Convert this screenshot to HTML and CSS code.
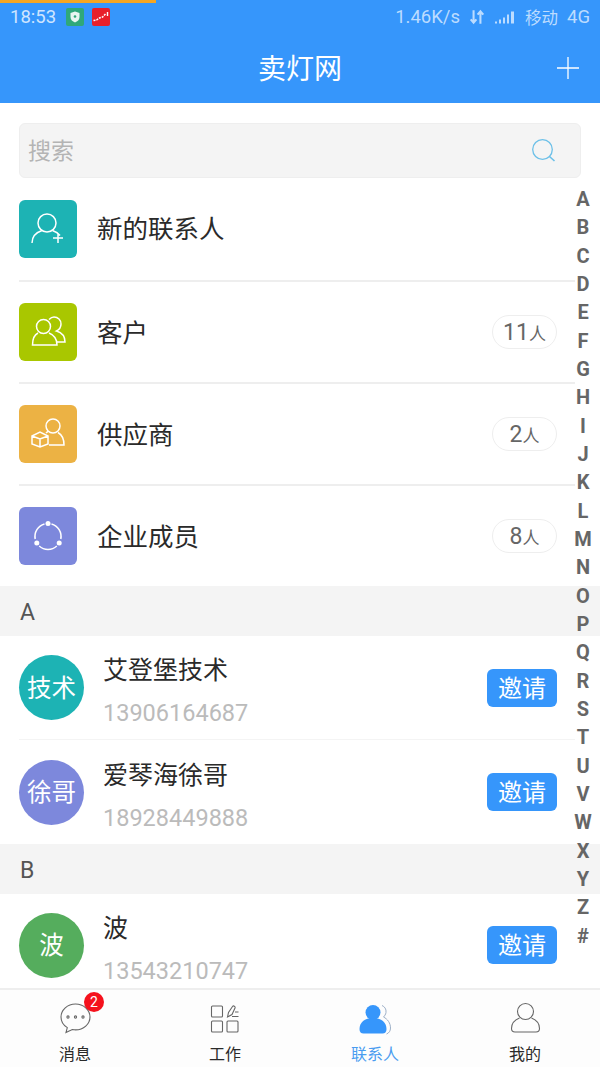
FILE: index.html
```html
<!DOCTYPE html>
<html lang="zh-CN">

<head>
    <meta charset="UTF-8">
    <meta name="viewport" content="width=device-width, initial-scale=1.0">
    <title>卖灯网</title>
    <link rel="stylesheet" href="styles.css">
</head>

<body>
    <div class="app">
        <div class="top">
            <div class="progress"></div>
            <div class="status">
                <span class="time">18:53</span>
                <svg class="app-icon" viewBox="0 0 18 18">
                    <rect width="18" height="18" rx="2" fill="#2fa87a" />
                    <path d="M9 3.500l4.500 1.500v4c0 2.800-2 4.400-4.500 5.500C6.500 13.400 4.500 11.800 4.500 9V5z" fill="#e8f6f0" />
                    <circle cx="9" cy="8.500" r="1.300" fill="#2fa87a" />
                </svg>
                <svg class="app-icon" viewBox="0 0 18 18">
                    <rect width="18" height="18" rx="2" fill="#e8202a" />
                    <path d="M1.500 12.500l3-.5 3-2 3-1 3-3" fill="none" stroke="#fff" stroke-width="1.500" stroke-dasharray="2 1" />
                    <path d="M15.500 4v4" stroke="#fff" stroke-width="1.400" />
                </svg>
                <span class="status-right">
                    <span>1.46K/s</span>
                    <svg class="arrows" viewBox="0 0 14 14">
                        <path d="M4 1v11M1.500 9L4 12l2.500-3M10 13V2M7.500 5L10 2l2.500 3" fill="none" stroke="#bcdcff" stroke-width="1.800" />
                    </svg>
                    <svg class="signal" viewBox="0 0 22 12">
                        <path d="M1 10h2v2H1zM5 8h2v4H5zM9 6h2v6H9zM13 3h2v9h-2zM17 0h3v12h-3z" fill="#bcdcff" />
                    </svg>
                    <span class="carrier">移动</span>
                    <span>4G</span>
                </span>
            </div>
            <div class="title-bar">
                <span class="title">卖灯网</span>
                <svg class="plus" viewBox="0 0 24 24">
                    <path d="M12 1v22M1 12h22" stroke="#fff" stroke-width="1.300" fill="none" />
                </svg>
            </div>
        </div>

        <div class="search-wrap">
            <div class="search">
                <span class="search-text">搜索</span>
                <svg class="search-icon" viewBox="0 0 26 26">
                    <circle cx="11.500" cy="11.500" r="9.800" fill="none" stroke="#6cc0e8" stroke-width="1.300" />
                    <path d="M18.500 18.500l5 4.500" stroke="#6cc0e8" stroke-width="1.600" fill="none" />
                </svg>
            </div>
        </div>

        <div class="group-row first">
            <div class="group-icon teal">
                <svg viewBox="0 0 58 58">
                    <circle cx="28" cy="23" r="9" />
                    <path d="M13 43c0-6 4-10.500 10-12.500M33.500 30.500c3 1 5.500 2.500 7.500 5M39 33v10M34 38h10" />
                </svg>
            </div>
            <span class="group-name">新的联系人</span>
        </div>
        <div class="group-row">
            <div class="group-icon green">
                <svg viewBox="0 0 58 58">
                    <circle cx="24.500" cy="23.500" r="7" />
                    <path d="M19 30c-4 2-5.500 6-5.500 12H38c0-6-3-10-8-12" />
                    <path d="M30 16.500c1.500-1.500 3-2.500 5-2.500 4 0 7 3 7 7 0 3-1.500 5.500-4.500 7 5 1.500 8.500 5.500 8.500 11l-8 0" />
                </svg>
            </div>
            <span class="group-name">客户</span>
            <span class="count"><b>11</b>人</span>
        </div>
        <div class="group-row">
            <div class="group-icon orange">
                <svg viewBox="0 0 58 58">
                    <circle cx="34" cy="21" r="7" />
                    <path d="M29 26.500c-1 .5-1.500 1-2 1.500M39 27.500c3.500 2 6 6.500 6 12.500H30" />
                    <path d="M13 31l8-4 8 4v8l-8 3-8-3zM13 31l8 3 8-3M21 34v8" />
                </svg>
            </div>
            <span class="group-name">供应商</span>
            <span class="count"><b>2</b>人</span>
        </div>
        <div class="group-row">
            <div class="group-icon purple">
                <svg viewBox="0 0 58 58">
                    <path d="M32.500 17A13 13 0 0 1 41.800 32M37.800 39A13 13 0 0 1 20.200 39M16.200 32A13 13 0 0 1 25.500 17" />
                    <circle class="dot" cx="29" cy="16.500" r="2.500" />
                    <circle class="dot" cx="17.800" cy="36" r="2.500" />
                    <circle class="dot" cx="40.200" cy="36" r="2.500" />
                </svg>
            </div>
            <span class="group-name">企业成员</span>
            <span class="count"><b>8</b>人</span>
        </div>

        <div class="section">A</div>
        <div class="contact line">
            <div class="avatar teal">技术</div>
            <div class="info">
                <div class="name">艾登堡技术</div>
                <div class="phone">13906164687</div>
            </div>
            <button class="invite">邀请</button>
        </div>
        <div class="contact">
            <div class="avatar purple">徐哥</div>
            <div class="info">
                <div class="name">爱琴海徐哥</div>
                <div class="phone">18928449888</div>
            </div>
            <button class="invite">邀请</button>
        </div>
        <div class="section">B</div>
        <div class="contact last">
            <div class="avatar leaf">波</div>
            <div class="info">
                <div class="name">波</div>
                <div class="phone">13543210747</div>
            </div>
            <button class="invite">邀请</button>
        </div>

        <div class="letters">
            <span>A</span><span>B</span><span>C</span><span>D</span><span>E</span><span>F</span><span>G</span>
            <span>H</span><span>I</span><span>J</span><span>K</span><span>L</span><span>M</span><span>N</span>
            <span>O</span><span>P</span><span>Q</span><span>R</span><span>S</span><span>T</span><span>U</span>
            <span>V</span><span>W</span><span>X</span><span>Y</span><span>Z</span><span>#</span>
        </div>

        <div class="tabs">
            <div class="tab">
                <div class="tab-icon">
                    <svg viewBox="0 0 34 34">
                        <path class="line-icon" d="M17.500 3C9.500 3 3 8.800 3 16c0 4.500 2.500 8.300 6.300 10.600L8 31.500l6.300-3c1 .2 2.100.4 3.200.4 8 0 14.500-5.800 14.500-12.900S25.500 3 17.500 3z" />
                        <circle class="line-icon" cx="10" cy="16" r="1.100" />
                        <circle class="line-icon" cx="17.500" cy="16" r="1.100" />
                        <circle class="line-icon" cx="25" cy="16" r="1.100" />
                    </svg>
                    <span class="badge">2</span>
                </div>
                <span class="tab-label">消息</span>
            </div>
            <div class="tab">
                <div class="tab-icon">
                    <svg viewBox="0 0 34 34">
                        <rect class="line-icon" x="3.500" y="5" width="11" height="11" rx="1" />
                        <rect class="line-icon" x="3.500" y="20" width="11" height="11" rx="1" />
                        <rect class="line-icon" x="19" y="20" width="11" height="11" rx="1" />
                        <path class="line-icon" d="M19.500 16l1-4.500 4-6c1-1.200 3-.2 2.500 1.500l-3 6.500zM27 11h3.500M24 15.500h6.500" />
                    </svg>
                </div>
                <span class="tab-label">工作</span>
            </div>
            <div class="tab active">
                <div class="tab-icon">
                    <svg viewBox="0 0 34 34">
                        <path d="M24 4.500c2.500 1 4.500 3.500 4 7-.3 2-1.500 3.500-2.500 4.500 4 2 7 6 7 11 0 3-1.500 5-4 6" fill="none" stroke="#9db0c8" stroke-width="1" />
                        <circle cx="15" cy="11.500" r="7.500" fill="#3696fb" />
                        <path d="M1.500 28c0-6.500 5-11 13.500-11s13.500 4.500 13.500 11c0 3-1.500 4.500-4 4.500h-19c-2.500 0-4-1.500-4-4.500z" fill="#3696fb" />
                    </svg>
                </div>
                <span class="tab-label">联系人</span>
            </div>
            <div class="tab">
                <div class="tab-icon">
                    <svg viewBox="0 0 34 34">
                        <circle class="line-icon" cx="17.500" cy="10.500" r="8" />
                        <path class="line-icon" d="M11.500 17C6.500 19 3.500 23 3.500 27.500c0 2 1 3.500 3.500 3.500h21c2.500 0 3.500-1.500 3.500-3.500 0-4.500-3-8.500-8-10.500" />
                    </svg>
                </div>
                <span class="tab-label">我的</span>
            </div>
        </div>
    </div>
</body>

</html>
```

FILE: styles.css
```css
* {
    box-sizing: border-box;
}

body {
    margin: 0;
    background: #fff;
    font-family: "Roboto", "Noto Sans CJK SC", sans-serif;
}

.app {
    position: relative;
    width: 600px;
    height: 1067px;
    overflow: hidden;
    display: flex;
    flex-direction: column;
}

.top {
    height: 103px;
    background: #3696fb;
    flex-shrink: 0;
}

.progress {
    width: 156px;
    height: 3px;
    background: #f5a623;
}

.status {
    height: 28px;
    padding: 0 10px;
    display: flex;
    align-items: center;
    color: #cfe5ff;
    font-size: 18.500px;
}

.time {
    margin-right: 10px;
}

.app-icon {
    width: 18px;
    height: 18px;
    margin-right: 8px;
}

.status-right {
    margin-left: auto;
    display: flex;
    align-items: center;
    gap: 9px;
    color: #bcdcff;
}

.carrier {
    font-size: 16.500px;
}

.arrows {
    width: 16px;
    height: 16px;
}

.signal {
    width: 22px;
    height: 13px;
}

.title-bar {
    position: relative;
    height: 72px;
    display: flex;
    align-items: center;
    justify-content: center;
}

.title {
    color: #fff;
    font-size: 28px;
}

.plus {
    position: absolute;
    right: 20px;
    top: 25px;
    width: 24px;
    height: 24px;
}

.search-wrap {
    padding: 20px 19px 0;
    height: 75px;
    flex-shrink: 0;
}

.search {
    height: 55px;
    border: 1px solid #eee;
    border-radius: 6px;
    background: #f4f4f4;
    display: flex;
    align-items: center;
    justify-content: space-between;
    padding: 0 23px 0 8px;
}

.search-text {
    font-size: 23px;
    color: #b4b4b4;
    padding-bottom: 4px;
}

.search-icon {
    width: 26px;
    height: 26px;
}

.group-row {
    height: 102px;
    flex-shrink: 0;
    margin: 0 25px 0 19px;
    border-top: 2px solid #eee;
    display: flex;
    align-items: center;
    padding-right: 18px;
}

.group-row.first {
    border-top: 0;
    padding-bottom: 1px;
}

.group-icon {
    width: 58px;
    height: 58px;
    border-radius: 6px;
    margin-right: 20px;
}

.group-icon svg {
    display: block;
    width: 58px;
    height: 58px;
    fill: none;
    stroke: #fff;
    stroke-width: 1.500;
}

.group-icon .dot {
    fill: #fff;
    stroke: none;
}

.teal {
    background: #1db3b4;
}

.green {
    background: #a9c700;
}

.orange {
    background: #ecb244;
}

.purple {
    background: #7d88dc;
}

.leaf {
    background: #55ad5d;
}

.group-name {
    font-size: 25.500px;
    color: #2a2a2a;
    padding-bottom: 4px;
}

.count {
    margin-left: auto;
    width: 65px;
    height: 34px;
    border: 1px solid #eee;
    border-radius: 17px;
    display: flex;
    align-items: center;
    justify-content: center;
    font-size: 17px;
    color: #666;
}

.count b {
    font-weight: 400;
    font-size: 23px;
}

.section {
    height: 50px;
    flex-shrink: 0;
    background: #f4f4f4;
    padding: 2px 0 0 20px;
    display: flex;
    align-items: center;
    font-size: 23px;
    color: #555;
}

.contact {
    height: 104px;
    flex-shrink: 0;
    margin: 0 25px 0 19px;
    padding-right: 18px;
    display: flex;
    align-items: center;
}

.contact.line {
    border-bottom: 1px solid #f4f4f4;
}

.contact.last {
    padding-bottom: 2px;
}

.avatar {
    width: 65px;
    height: 65px;
    border-radius: 50%;
    display: flex;
    align-items: center;
    justify-content: center;
    color: #fff;
    font-size: 24.500px;
    padding-bottom: 3px;
    flex-shrink: 0;
}

.info {
    margin-left: 19px;
    flex: 1;
    padding-top: 6px;
}

.name {
    font-size: 25px;
    color: #2a2a2a;
    line-height: 34px;
}

.phone {
    font-size: 23.500px;
    color: #bbb;
    line-height: 28px;
    margin-top: 11px;
}

.invite {
    width: 70px;
    height: 38px;
    border: 0;
    border-radius: 6px;
    background: #3696fb;
    color: #fff;
    font-family: inherit;
    font-size: 24px;
    padding: 0 0 3px;
}

.letters {
    position: absolute;
    top: 185px;
    right: 7px;
    width: 20px;
    display: flex;
    flex-direction: column;
    align-items: center;
    font-size: 20px;
    font-weight: 700;
    color: #666;
}

.letters span {
    height: 28.330px;
    line-height: 28.330px;
}

.tabs {
    position: absolute;
    left: 0;
    right: 0;
    bottom: 0;
    height: 79px;
    background: #fdfdfd;
    border-top: 2px solid #eee;
    display: grid;
    grid-template-columns: repeat(4, 1fr);
}

.tab {
    display: flex;
    flex-direction: column;
    align-items: center;
    color: #2a2a2a;
}

.tab-icon {
    position: relative;
    width: 34px;
    height: 34px;
    margin-top: 11px;
}

.tab-icon svg {
    display: block;
    width: 34px;
    height: 34px;
}

.line-icon {
    fill: none;
    stroke: #666;
    stroke-width: 1.100;
}

.badge {
    position: absolute;
    top: -9px;
    right: -12px;
    width: 20px;
    height: 20px;
    border-radius: 50%;
    background: #f5121d;
    color: #fff;
    font-size: 14px;
    display: flex;
    align-items: center;
    justify-content: center;
}

.tab-label {
    margin-top: 9px;
    font-size: 16px;
    line-height: 22px;
}

.tab.active .tab-label {
    color: #4a9cf0;
}
```
